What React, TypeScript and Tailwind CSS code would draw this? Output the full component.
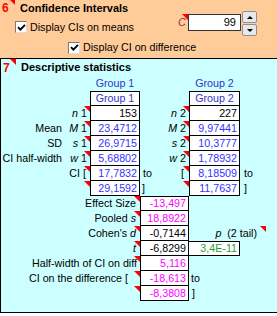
function Tri({ className = "top-0 right-0" }: { className?: string }) {
  return (
    <span
      className={`absolute w-0 h-0 border-t-[6px] border-t-[#ff0000] border-l-[6px] border-l-transparent ${className}`}
    />
  );
}

function Check({ className = "" }: { className?: string }) {
  return (
    <span
      className={`flex shrink-0 items-center justify-center w-[12px] h-[12px] bg-white border border-t-[#7a7a7a] border-l-[#7a7a7a] border-b-[#dcdcdc] border-r-[#dcdcdc] ${className}`}
    >
      <svg width="9" height="9" viewBox="0 0 9 9">
        <path d="M1 4.2 L3.4 6.6 L8 1.8" fill="none" stroke="#000" strokeWidth="1.9" />
      </svg>
    </span>
  );
}

function SpinBtn({ up }: { up?: boolean }) {
  return (
    <div className="flex h-[12px] w-[15px] items-center justify-center rounded-[2px] border border-[#8a8f99] bg-[#e8e8ea]">
      <span
        className={
          up
            ? "w-0 h-0 border-l-[3px] border-r-[3px] border-b-[3px] border-l-transparent border-r-transparent border-b-black"
            : "w-0 h-0 border-l-[3px] border-r-[3px] border-t-[3px] border-l-transparent border-r-transparent border-t-black"
        }
      />
    </div>
  );
}

// one row of the upper table: label, symbol, group 1 value, symbol 2, group 2 value
function StatRow({
  label,
  s1,
  v1,
  s2,
  v2,
  sym,
  blue = true,
}: {
  label: string;
  s1: string;
  v1: string;
  s2: string;
  v2: string;
  sym: string;
  blue?: boolean;
}) {
  const val = blue ? "text-[#3333ff]" : "text-black";
  return (
    <>
      <div className="flex items-center justify-end pr-[1px]">{label}</div>
      <div className="relative flex items-center justify-end pr-[3px]">
        <i>{sym}</i>&nbsp;{s1}
        <Tri />
      </div>
      <div className={`flex items-center justify-end pr-[2px] bg-white border-l border-r border-b border-black ${val}`}>{v1}</div>
      <div className="relative flex items-center justify-end pr-[3px]">
        <i>{sym}</i>&nbsp;{s2}
        <Tri />
      </div>
      <div className={`flex items-center justify-end pr-[2px] bg-white border-l border-r border-b border-black ${val}`}>{v2}</div>
      <div />
    </>
  );
}

function LowRow({
  label,
  value,
  color,
  first,
  pr = "pr-[4px]",
  after,
}: {
  label: React.ReactNode;
  value: string;
  color: string;
  first?: boolean;
  pr?: string;
  after?: React.ReactNode;
}) {
  return (
    <>
      <div className={`relative col-span-3 flex items-center justify-end ${pr}`}>
        {label}
        <Tri />
      </div>
      <div
        className={`flex items-center justify-end pr-[2px] bg-white border-l border-r border-b border-black ${first ? "border-t" : ""} ${color}`}
      >
        {value}
      </div>
      {after ?? (
        <>
          <div />
          <div />
        </>
      )}
    </>
  );
}

export default function App() {
  return (
    <div className="w-[277px] h-[316px] bg-white font-['Liberation_Sans',Arial,sans-serif] text-[10.7px] text-black leading-none whitespace-nowrap">
      {/* 6 Confidence Intervals */}
      <div className="flex h-[58px] bg-[#ffcc99]">
        <div className="min-w-0 flex-1">
          <div className="flex h-[16px] items-center pl-[2px]">
            <span className="relative w-[18px] text-[12px] font-bold text-[#ff0000]">
              6
              <Tri className="top-[-3px] left-[7px]" />
            </span>
            <span className="text-[11px] font-bold">Confidence Intervals</span>
          </div>
          <div className="flex h-[22px] items-center gap-[3px] pl-[15px]">
            <Check />
            <span>Display CIs on means</span>
          </div>
          <div className="flex h-[19px] items-center gap-[3px] pl-[68px]">
            <Check />
            <span>Display CI on difference</span>
          </div>
        </div>
        <div className="flex items-start pt-[11px] pr-[20px]">
          <div className="relative mt-[3px] flex h-[17px] w-[10px] items-center text-[11px] italic text-[#993333]">
            C
            <Tri />
          </div>
          <div className="mt-[3px] flex h-[17px] w-[53px] items-center justify-end border border-[#333] bg-white pr-[4px] text-[11px]">
            99
          </div>
          <div className="ml-[1px] flex flex-col gap-[1px]">
            <SpinBtn up />
            <SpinBtn />
          </div>
        </div>
      </div>

      {/* 7 Descriptive statistics */}
      <div className="h-[255px] bg-[#ccffff] border-t border-l border-b border-black">
        <div className="flex h-[17px] items-center pl-[2px]">
          <span className="relative w-[18px] text-[12px] font-bold text-[#ff0000]">
            7
            <Tri className="top-[-3px] left-[7px]" />
          </span>
          <span className="text-[11px] font-bold">Descriptive statistics</span>
        </div>

        <div className="grid grid-cols-[62px_27px_50px_49px_51px_37px] auto-rows-[15px]">
          {/* group headers */}
          <div className="col-span-2" />
          <div className="flex items-center justify-center text-[#3333cc]">Group 1</div>
          <div />
          <div className="flex items-center justify-center text-[#3333cc]">Group 2</div>
          <div />

          <div className="col-span-2" />
          <div className="flex items-center justify-center bg-white border border-black text-[#3333cc]">Group 1</div>
          <div />
          <div className="flex items-center justify-center bg-white border border-black text-[#3333cc]">Group 2</div>
          <div />

          <StatRow label="" sym="n" s1="1" v1="153" s2="2" v2="227" blue={false} />
          <StatRow label="Mean" sym="M" s1="1" v1="23,4712" s2="2" v2="9,97441" />
          <StatRow label="SD" sym="s" s1="1" v1="26,9715" s2="2" v2="10,3777" />
          <StatRow label="CI half-width" sym="w" s1="1" v1="5,68802" s2="2" v2="1,78932" />

          {/* CI lower */}
          <div className="relative col-span-2 flex items-center justify-end pr-[4px]">
            CI&nbsp;[
            <Tri />
          </div>
          <div className="flex items-center justify-end pr-[2px] bg-white border-l border-r border-b border-black text-[#3333ff]">17,7832</div>
          <div className="relative flex items-center justify-between pl-[3px] pr-[5px]">
            <span>to</span>
            <span>[</span>
            <Tri />
          </div>
          <div className="flex items-center justify-end pr-[2px] bg-white border-l border-r border-b border-black text-[#3333ff]">8,18509</div>
          <div className="flex items-center pl-[4px]">to</div>

          {/* CI upper */}
          <div className="relative col-span-2">
            <Tri />
          </div>
          <div className="flex items-center justify-end pr-[2px] bg-white border-l border-r border-b border-black text-[#3333ff]">29,1592</div>
          <div className="relative flex items-center pl-[2px]">
            ]
            <Tri />
          </div>
          <div className="flex items-center justify-end pr-[2px] bg-white border-l border-r border-b border-black text-[#3333ff]">11,7637</div>
          <div className="flex items-center pl-[4px]">]</div>

          <LowRow first label="Effect Size" value="-13,497" color="text-[#ff00ff]" />
          <LowRow
            label={
              <>
                Pooled&nbsp;<i>s</i>
              </>
            }
            value="18,8922"
            color="text-[#ff00ff]"
          />
          <LowRow
            label={
              <>
                Cohen's&nbsp;<i>d</i>
              </>
            }
            value="-0,7144"
            color="text-black"
            after={
              <div className="relative col-span-2 flex items-center justify-end pr-[20px]">
                <i>p</i>&nbsp;&nbsp;(2 tail)
                <Tri className="top-0 right-[11px]" />
              </div>
            }
          />
          <LowRow
            label={<i>t</i>}
            value="-6,8299"
            color="text-black"
            after={
              <>
                <div className="flex items-center justify-end pr-[2px] bg-white border-t border-r border-b border-black text-[#339933]">3,4E-11</div>
                <div />
              </>
            }
          />
          <LowRow label="Half-width of CI on diff" value="5,116" color="text-[#ff00ff]" pr="pr-[3px]" />
          <LowRow
            label="CI on the difference ["
            value="-18,613"
            color="text-[#ff00ff]"
            pr="pr-[12px]"
            after={
              <>
                <div className="flex items-center pl-[2px]">to</div>
                <div />
              </>
            }
          />
          <LowRow
            label=""
            value="-8,3808"
            color="text-[#ff00ff]"
            after={
              <>
                <div className="flex items-center pl-[3px]">]</div>
                <div />
              </>
            }
          />
        </div>
      </div>
    </div>
  );
}
